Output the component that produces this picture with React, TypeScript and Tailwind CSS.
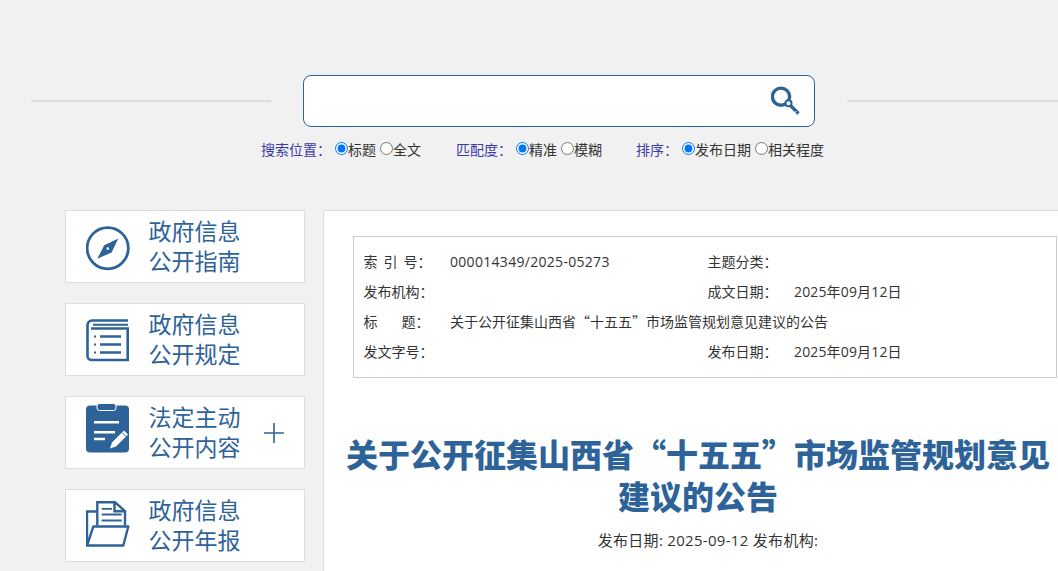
const blue = "#2e6399";

function CompassIcon() {
  return <svg width="44" height="60" viewBox="0 0 44 60" fill="none">
      <circle cx="21.7" cy="31.2" r="20.6" stroke={blue} strokeWidth="2.8" />
      <path d="M32.3 21.5L25.6 35.4L11.3 41.8L18.2 28.2Z" fill={blue} />
      <circle cx="21.8" cy="31.6" r="1.3" fill="#fff" />
    </svg>;
}

function BookIcon() {
  return <svg width="44" height="60" viewBox="0 0 44 60" fill="none" stroke={blue}>
      <path d="M42 10.5H6a4.5 4.5 0 0 0-4.5 4.5V46a4 4 0 0 0 4 4H41.7V18.5H5" strokeWidth="2.6" />
      <path d="M7 14.8H42" strokeWidth="2" />
      <path d="M14 26.5H35M14 34.5H35M14 42.5H35" strokeWidth="2.4" />
      <path d="M8 26.5H10.5M8 34.5H10.5M8 42.5H10.5" strokeWidth="2.2" strokeDasharray="2 1" />
    </svg>;
}

function ClipboardIcon() {
  return <svg width="44" height="60" viewBox="0 0 44 60" fill="none">
      <rect x="0" y="2.5" width="43" height="47" rx="4" fill={blue} />
      <rect x="11" y="0.5" width="19" height="7" rx="2.5" fill={blue} stroke="#fff" strokeWidth="1" />
      <path d="M8 19.3H33M8 29.3H29M8 36H19" stroke="#fff" strokeWidth="2.6" />
      <path d="M24 45.5L26 39.5L38 27.5L42 31.5L30 43.5Z" fill="#fff" />
      <path d="M36 29.5L40 33.5" stroke={blue} strokeWidth="1" />
    </svg>;
}

function FolderIcon() {
  return <svg width="44" height="60" viewBox="0 0 44 60" fill="none" stroke={blue} strokeWidth="2.4">
      <path d="M11.3 29.5V6.2H29L39 15.2V29.5M28.5 6.2V15.2H39" />
      <path d="M15.7 12.8H26M15.7 18.5H35.7M15.7 24.5H35.7" strokeWidth="1.8" />
      <path d="M11.3 15.5H1V49.5" />
      <path d="M1 49.5H37.3L42.3 30.5H7.3Z" strokeLinejoin="round" />
    </svg>;
}

function SearchIcon() {
  return <svg width="30" height="30" viewBox="0 0 30 30" fill="none" stroke={blue}>
      <circle cx="10" cy="10.7" r="8.6" strokeWidth="3.4" />
      <path d="M19.5 19.5L27.5 27.5" strokeWidth="3.4" />
      <path d="M23.5 27L25.5 25" stroke="#fff" strokeWidth="1" />
      <circle cx="17.5" cy="17.3" r="3" fill="#fff" strokeWidth="2" />
    </svg>;
}

const navItems = [{
  icon: CompassIcon,
  lines: ["政府信息", "公开指南"]
}, {
  icon: BookIcon,
  lines: ["政府信息", "公开规定"]
}, {
  icon: ClipboardIcon,
  lines: ["法定主动", "公开内容"],
  expand: true
}, {
  icon: FolderIcon,
  lines: ["政府信息", "公开年报"]
}];

function Radio({ name, checked, label, className }: { name: string; checked?: boolean; label: string; className?: string }) {
  return <label className={`flex items-center ${className ?? ""}`}>
      <input type="radio" name={name} defaultChecked={checked} className="w-[13px] h-[13px] -translate-y-px" />
      <span>{label}</span>
    </label>;
}

export default function App() {
  return <div className="h-[571px] overflow-hidden bg-[#f1f1f1] font-['Open_Sans','Noto_Sans_CJK_SC',sans-serif] text-[14px] text-[#333]">
      <div className="pt-[75px] pl-[31px] flex items-center gap-8 w-[1100px]">
        <div className="w-[240px] h-[2px] bg-[#ddd]" />
        <div className="w-[512px] h-[52px] bg-white border border-[#2e6399] rounded-[8px] flex items-center justify-end pr-[13px]">
          <SearchIcon />
        </div>
        <div className="w-[240px] h-[2px] bg-[#ddd]" />
      </div>

      <div className="mt-[12px] pl-[261px] h-[20px] flex items-center">
        <span className="w-[74px] text-[#3b3ba6]">搜索位置：</span>
        <Radio name="pos" checked label="标题" className="mr-[4px]" />
        <Radio name="pos" label="全文" />
        <span className="ml-[35px] w-[60px] text-[#3b3ba6]">匹配度：</span>
        <Radio name="match" checked label="精准" className="mr-[4px]" />
        <Radio name="match" label="模糊" />
        <span className="ml-[34px] w-[46px] text-[#3b3ba6]">排序：</span>
        <Radio name="sort" checked label="发布日期" className="mr-[4px]" />
        <Radio name="sort" label="相关程度" />
      </div>

      <div className="mt-[51px] flex items-start">
        <div className="ml-[65px] w-[240px] shrink-0 flex flex-col gap-5">
          {navItems.map((item, index) => <div key={index} className="h-[73px] bg-white border border-[#ddd] pl-[20px] flex items-center text-[23px] leading-[30px] text-[#2e6399]">
              <item.icon />
              <div className="ml-[18.5px] w-[92.5px] pb-px whitespace-nowrap">
                {item.lines.map(line => <div key={line}>{line}</div>)}
              </div>
              {item.expand && <svg width="20" height="20" viewBox="0 0 20 20" className="ml-[23px]" stroke={blue} strokeWidth="1.6">
                  <path d="M0 10H20M10 0V20" />
                </svg>}
            </div>)}
        </div>

        <div className="ml-[18px] w-[760px] shrink-0 h-[400px] bg-white border border-[#ddd] pt-[25px] pl-[29px]">
          <div className="w-[704px] h-[142px] border border-[#ccc] pt-[9px] pl-[9.5px] grid grid-cols-[344px_1fr] auto-rows-[30px] items-center">
            <div className="flex">
              <span className="w-[86.5px] flex gap-[6px]"><span>索</span><span>引</span><span>号：</span></span>
              <span className="tracking-[0.3px]">000014349/2025-05273</span>
            </div>
            <div className="flex">
              <span className="w-[86.5px]">主题分类：</span>
            </div>
            <div className="flex">
              <span className="w-[86.5px]">发布机构：</span>
            </div>
            <div className="flex">
              <span className="w-[86.5px]">成文日期：</span>
              <span className="tracking-[0.15px]">2025年09月12日</span>
            </div>
            <div className="flex col-span-2">
              <span className="w-[86.5px] flex gap-[24px]"><span>标</span><span>题：</span></span>
              <span className="font-['Noto_Sans_CJK_SC',sans-serif]">关于公开征集山西省“十五五”市场监管规划意见建议的公告</span>
            </div>
            <div className="flex">
              <span className="w-[86.5px]">发文字号：</span>
            </div>
            <div className="flex">
              <span className="w-[86.5px]">发布日期：</span>
              <span className="tracking-[0.15px]">2025年09月12日</span>
            </div>
          </div>

          <h1 className="mt-[54px] -ml-[13px] w-[716px] text-center text-[32px] leading-[42px] font-black text-[#2e6399] font-['Noto_Sans_CJK_SC',sans-serif]">
            关于公开征集山西省“十五五”市场监管规划意见建议的公告
          </h1>
          <p className="mt-[14px] -ml-[13px] w-[736px] text-center leading-[20px] text-[15px] tracking-[0.3px]">发布日期: 2025-09-12 发布机构:</p>
        </div>
      </div>
    </div>;
}
